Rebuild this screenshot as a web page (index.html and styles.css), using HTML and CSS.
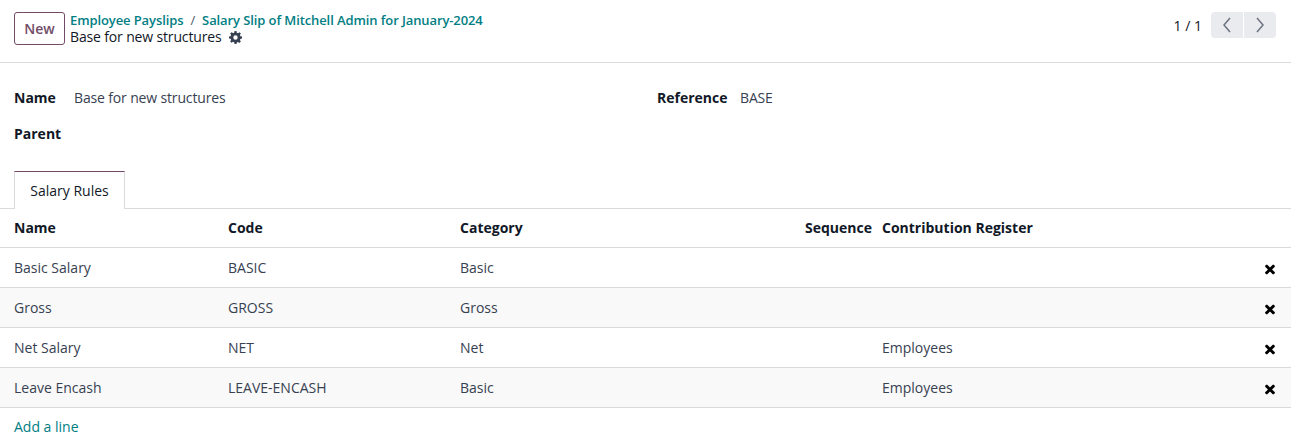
FILE: index.html
```html
<!DOCTYPE html>
<html>
<head>
<meta charset="utf-8">
<link rel="stylesheet" href="styles.css">
</head>
<body>
<div class="cp">
  <div class="cp-left">
    <button class="btn-new">New</button>
    <div class="crumbs">
      <div class="crumb-line">
        <a class="crumb">Employee Payslips</a><span class="sep">/</span><a class="crumb">Salary Slip of Mitchell Admin for January-2024</a>
      </div>
      <div class="current">
        <span>Base for new structures</span>
        <svg class="gear" width="13" height="13" viewBox="0 0 16 16"><path fill="#374151" fill-rule="evenodd" d="M6.8 0h2.4l.4 2.1a6 6 0 0 1 1.5.6l1.8-1.2 1.7 1.7-1.2 1.8c.3.5.5 1 .6 1.5l2 .4v2.4l-2 .4c-.1.5-.3 1-.6 1.5l1.2 1.8-1.700 1.7-1.8-1.2c-.5.3-1 .5-1.5.6L9.2 16H6.8l-.4-2.1a6 6 0 0 1-1.5-.6l-1.8 1.2-1.7-1.7 1.2-1.8c-.3-.5-.5-1-.6-1.5L0 9.2V6.8l2-.4c.1-.5.3-1 .6-1.5L1.4 3.1l1.7-1.7 1.8 1.2c.5-.3 1-.5 1.5-.6zM8 5.3a2.7 2.7 0 1 0 0 5.4 2.7 2.7 0 0 0 0-5.4z"/></svg>
      </div>
    </div>
  </div>
  <div class="cp-right">
    <span class="pager-val">1 / 1</span>
    <div class="pager-btns">
      <button class="pbtn"><svg width="10" height="16" viewBox="0 0 10 16"><path d="M8 1 2 8l6 7" fill="none" stroke="#6b7280" stroke-width="1.5"/></svg></button>
      <button class="pbtn"><svg width="10" height="16" viewBox="0 0 10 16"><path d="M2 1l6 7-6 7" fill="none" stroke="#6b7280" stroke-width="1.5"/></svg></button>
    </div>
  </div>
</div>

<div class="sheet">
  <div class="fields">
    <div class="col">
      <div class="field"><span class="label">Name</span><span class="value">Base for new structures</span></div>
      <div class="field"><span class="label">Parent</span><span class="value"></span></div>
    </div>
    <div class="col">
      <div class="field"><span class="label">Reference</span><span class="value">BASE</span></div>
    </div>
  </div>

  <div class="tabs">
    <div class="tab active">Salary Rules</div>
  </div>

  <table class="list">
    <thead>
      <tr>
        <th class="c-name">Name</th>
        <th class="c-code">Code</th>
        <th class="c-cat">Category</th>
        <th class="c-seq">Sequence</th>
        <th class="c-reg">Contribution Register</th>
        <th class="c-del"></th>
      </tr>
    </thead>
    <tbody>
      <tr><td>Basic Salary</td><td>BASIC</td><td>Basic</td><td class="c-seq"></td><td></td><td class="c-del"><span class="del"></span></td></tr>
      <tr class="alt"><td>Gross</td><td>GROSS</td><td>Gross</td><td class="c-seq"></td><td></td><td class="c-del"><span class="del"></span></td></tr>
      <tr><td>Net Salary</td><td>NET</td><td>Net</td><td class="c-seq"></td><td>Employees</td><td class="c-del"><span class="del"></span></td></tr>
      <tr class="alt"><td>Leave Encash</td><td>LEAVE-ENCASH</td><td>Basic</td><td class="c-seq"></td><td>Employees</td><td class="c-del"><span class="del"></span></td></tr>
    </tbody>
  </table>
  <div class="add-line"><a>Add a line</a></div>
</div>
</body>
</html>
```

FILE: styles.css
```css
* { box-sizing: border-box; }
html, body { margin: 0; padding: 0; background: #fff; }
body {
  font-family: "Open Sans", "Noto Sans", sans-serif;
  font-size: 14px;
  color: #374151;
}
.cp {
  display: flex;
  justify-content: space-between;
  align-items: flex-start;
  padding: 12px 15px 0 14px;
  height: 63px;
  border-bottom: 1px solid #d8dadd;
}
.cp-left { display: flex; align-items: flex-start; gap: 5px; }
.btn-new {
  height: 33px;
  width: 51px;
  border: 1px solid #714b67;
  border-radius: 3px;
  background: #fff;
  color: #714b67;
  font-family: inherit;
  font-size: 14px;
  font-weight: 600;
  padding: 0;
}
.crumbs { display: flex; flex-direction: column; }
.crumb-line { font-size: 13px; font-weight: 600; line-height: 16px; color: #017e84; letter-spacing: -0.1px; }
.crumb { color: #017e84; }
.sep { color: #4b5563; margin: 0 7px 0 7px; font-weight: 400; }
.current { display: flex; align-items: center; gap: 8px; font-size: 14px; line-height: 17px; color: #111827; letter-spacing: -0.15px; }
.gear { margin-top: 1px; }
.cp-right { display: flex; align-items: center; gap: 9px; }
.pager-val { font-size: 14px; color: #111827; }
.pager-btns { display: flex; gap: 1px; }
.pbtn {
  width: 32px; height: 26px;
  border: none;
  background: #e9ebee;
  display: flex; align-items: center; justify-content: center;
  padding: 0;
}
.pbtn:first-child { border-radius: 4px 0 0 4px; }
.pbtn:last-child { border-radius: 0 4px 4px 0; }

.fields { display: flex; padding: 25px 14px 0 14px; }
.fields .col { flex: 1; display: flex; flex-direction: column; }
.field { display: flex; align-items: baseline; height: 36px; }
.label { font-weight: 700; color: #111827; width: 60px; font-size: 14px; }
.col + .col { padding-left: 23px; }
.col + .col .label { width: 83px; }
.value { color: #374151; letter-spacing: -0.15px; }

.tabs { display: flex; padding: 11px 14px 0 14px; border-bottom: 1px solid #d8dadd; }
.tab {
  height: 38px;
  width: 111px;
  border: 1px solid #d8dadd;
  border-top-color: #714b67;
  border-bottom: none;
  margin-bottom: -1px;
  background: #fff;
  display: flex; align-items: center; justify-content: center;
  font-size: 14px; color: #111827;
}

.list { width: 100%; border-collapse: collapse; }
.list th, .list td {
  height: 40px;
  padding: 0 4px;
  text-align: left;
  border-bottom: 1px solid #d8dadd;
  font-size: 14px;
  white-space: nowrap;
}
.list th { font-weight: 700; color: #111827; height: 38px; }
.list td { color: #374151; }
.list th:first-child, .list td:first-child { padding-left: 14px; }
.c-name { width: 224px; }
.c-code { width: 232px; }
.c-cat { width: 340px; }
.list .c-seq { width: 82px; text-align: right; padding-right: 6px; }
.list .c-del { width: 40px; text-align: center; padding-right: 6px; vertical-align: middle; }
tr.alt td { background: #f9f9f9; }
.del {
  display: inline-block;
  width: 10px; height: 10px;
  position: relative;
  top: 2px;
}
.del::before, .del::after {
  content: "";
  position: absolute;
  left: -1px; top: 3.5px;
  width: 12px; height: 3px;
  background: #000;
  border-radius: 1px;
}
.del::before { transform: rotate(45deg); }
.del::after { transform: rotate(-45deg); }
.add-line { padding: 9px 14px; font-size: 14px; }
.add-line a { color: #017e84; }
```
